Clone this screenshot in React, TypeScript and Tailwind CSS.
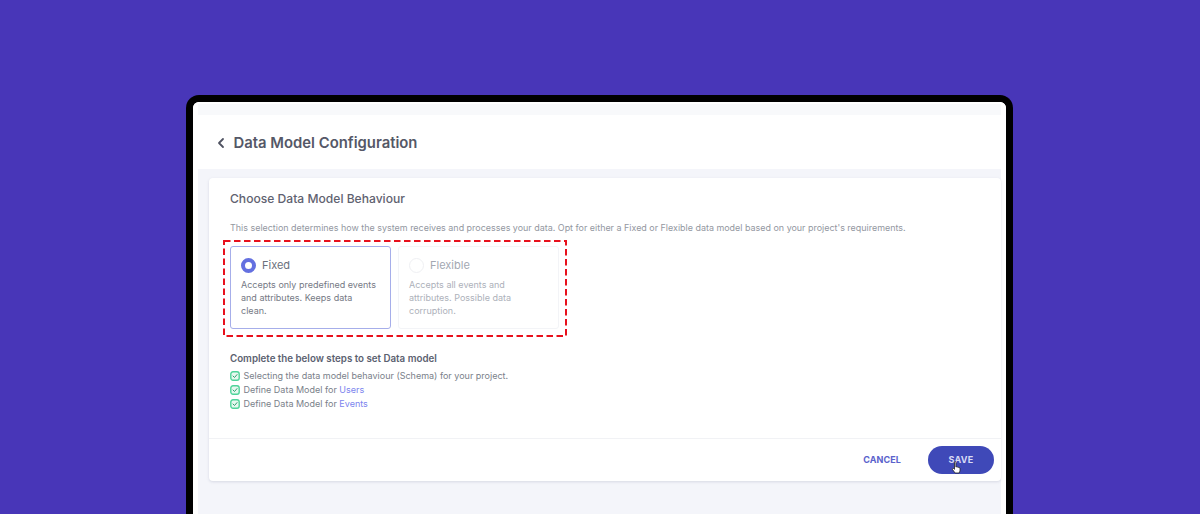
import React from "react";

function Check() {
  return (
    <svg width="10" height="10" viewBox="0 0 10 10" fill="none" className="shrink-0">
      <rect x="0.8" y="0.8" width="8.4" height="8.4" rx="2.2" fill="#e6f8ef" stroke="#4fd49a" strokeWidth="1.4" />
      <path d="M3 5l1.500 1.500L7 3.600" stroke="#2f9e6e" strokeWidth="1" strokeLinecap="round" strokeLinejoin="round" />
    </svg>
  );
}

function Step({ children }: { children: React.ReactNode }) {
  return (
    <div className="flex items-center gap-[3.5px] h-[14px] text-[9px] text-[#7a7f8a]">
      <Check />
      <span>{children}</span>
    </div>
  );
}

function Option({ title, lines, active }: { title: string; lines: string[]; active?: boolean }) {
  return (
    <div className={`w-[161px] h-[83px] rounded-[3px] border pl-[10px] pt-[9px] ${active ? "border-[#a6aeea]" : "border-[#f3f4f7]"}`}>
      <div className="flex items-center gap-[6.5px] h-[19px]">
        {active ? (
          <span className="w-[14.5px] h-[14.5px] rounded-full border-[4.5px] border-[#6470e0] bg-white" />
        ) : (
          <span className="w-[14.5px] h-[14.5px] rounded-full border border-[#eff0f3] bg-white" />
        )}
        <span className={`text-[11px] ${active ? "text-[#6a707c]" : "text-[#a3a8b2]"}`}>{title}</span>
      </div>
      <div className={`mt-[3px] text-[9px] leading-[13px] ${active ? "text-[#757984]" : "text-[#adb1ba]"}`}>
        {lines.map((l) => (
          <div key={l}>{l}</div>
        ))}
      </div>
    </div>
  );
}

export default function App() {
  return (
    <div className="w-[1200px] h-[514px] overflow-hidden bg-[#4836b8] pt-[95px] pl-[186px] font-['Inter',sans-serif] antialiased">
      <div className="w-[827px] h-[419px] rounded-t-[13px] border-[7px] border-b-0 border-black bg-white overflow-hidden">
        <div className="rounded-t-[4px] bg-white px-[5px] h-full">
          <div className="h-[13px] bg-[#f8f9fb] border-t-[2px] border-white" />
          <div className="h-[54px] flex items-center pl-[19px] pt-[2px] gap-[8.5px] bg-white">
            <svg width="8" height="12" viewBox="0 0 8 12" fill="none">
              <path d="M6 2L2 6l4 4" stroke="#4f5261" strokeWidth="1.800" strokeLinecap="round" strokeLinejoin="round" />
            </svg>
            <span className="text-[14.85px] font-semibold text-[#555867]">Data Model Configuration</span>
          </div>
          <div className="h-[345px] bg-[#f4f5fa] pl-[11px] pt-[9px]">
            <div className="w-[792px] h-[303px] bg-white rounded-[4px] shadow-[0_1px_3px_rgba(60,70,110,0.16)] flex flex-col">
              <div className="h-[261px] pl-[21px] pt-[13px] border-b border-[#f1f2f5]">
                <div className="text-[12.1px] font-medium leading-[16px] text-[#5f6270]">Choose Data Model Behaviour</div>
                <div className="mt-[14px] text-[8.95px] leading-[13px] text-[#93979f]">
                  This selection determines how the system receives and processes your data. Opt for either a Fixed or Flexible data model based on your project's requirements.
                </div>
                <div className="relative mt-[12px] flex gap-[7px]">
                  <svg className="absolute left-[-7px] top-[-6px] pointer-events-none" width="344" height="97" viewBox="0 0 344 97" fill="none">
                    <rect x="1" y="1" width="342" height="95" stroke="#e8101c" strokeWidth="2" strokeDasharray="6.500 3.500" />
                  </svg>
                  <Option active title="Fixed" lines={["Accepts only predefined events", "and attributes. Keeps data", "clean."]} />
                  <Option title="Flexible" lines={["Accepts all events and", "attributes. Possible data", "corruption."]} />
                </div>
                <div className="mt-[23px] text-[9.75px] font-semibold leading-[13px] text-[#5b6170]">Complete the below steps to set Data model</div>
                <div className="mt-[4px]">
                  <Step>Selecting the data model behaviour (Schema) for your project.</Step>
                  <Step>Define Data Model for <span className="text-[#7c84ee]">Users</span></Step>
                  <Step>Define Data Model for <span className="text-[#7c84ee]">Events</span></Step>
                </div>
              </div>
              <div className="flex-1 flex items-center justify-end pr-[7px] gap-[27px]">
                <span className="text-[9px] font-bold tracking-[0.1px] text-[#5a62cc]">CANCEL</span>
                <div className="relative w-[66px] h-[28px] rounded-full bg-[#3f49b8] flex items-center justify-center">
                  <span className="text-[9px] font-bold tracking-[0.2px] text-[#d8dbf5]">SAVE</span>
                  <svg className="absolute left-[23px] top-[15px]" width="12" height="14" viewBox="0 0 11 14">
                    <path d="M3 1.200c0-.9 1.400-.9 1.400 0V6l.5-.2c.5-.2 1 0 1.100.3.5-.2 1 0 1.100.4.5-.2 1.200 0 1.300.5.3 1.600.2 3.400-.8 5H3.600L1 8.500c-.5-.8.300-1.500 1-1L3 8.300V1.200z" fill="#fff" stroke="#222" strokeWidth="0.8" strokeLinejoin="round" />
                  </svg>
                </div>
              </div>
            </div>
          </div>
        </div>
      </div>
    </div>
  );
}
